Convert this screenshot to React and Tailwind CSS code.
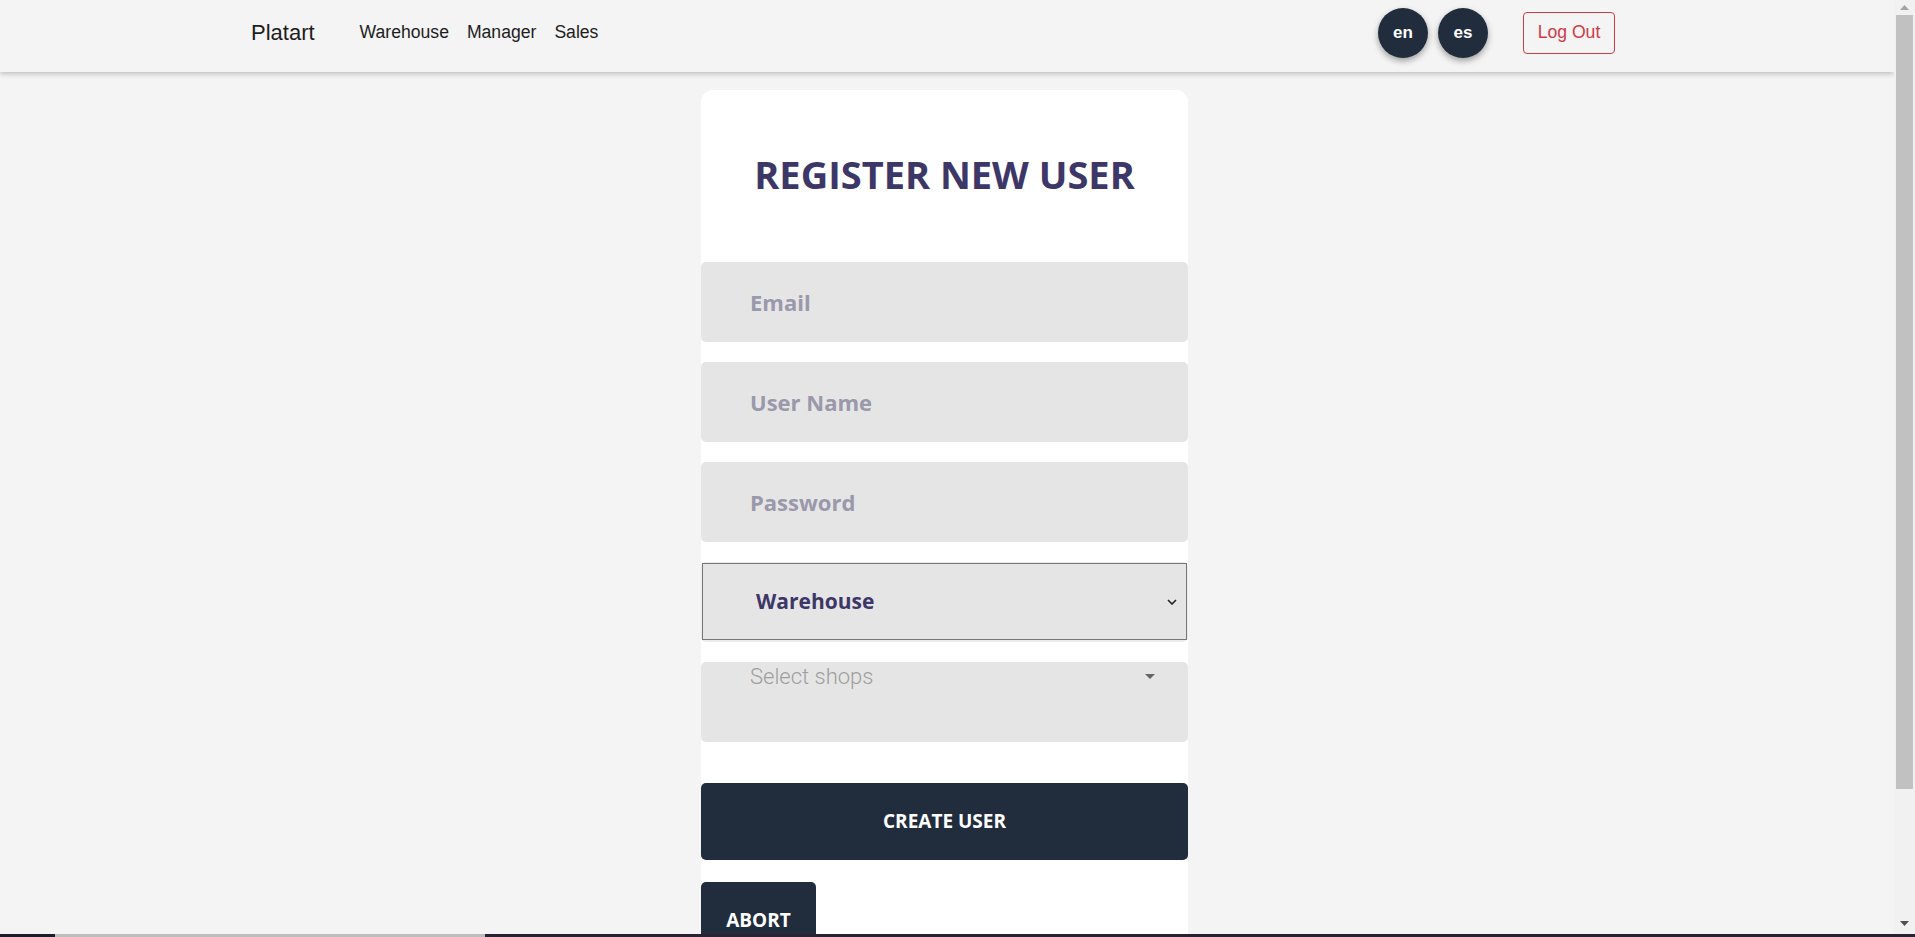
import React, { useState } from 'react';

const Navbar = ({ lang, setLang }) => (
  <nav className="h-[72px] shrink-0 bg-[#f4f4f4] shadow-[0_2px_5px_rgba(0,0,0,0.22)] relative z-10 font-['Liberation_Sans',Arial,sans-serif]">
    <div className="h-full flex items-center justify-between pl-[251px] pr-[279px] pb-[7px]">
      <div className="flex items-center">
        <a className="text-[22px] text-[#1d1d1d] leading-none">Platart</a>
        <ul className="flex items-center gap-[18px] ml-[45px] text-[17.6px] text-[#1d1d1d] leading-none">
          <li>Warehouse</li>
          <li>Manager</li>
          <li>Sales</li>
        </ul>
      </div>
      <div className="flex items-center">
        <div className="flex items-center gap-[10px]">
          {['en', 'es'].map(l => (
            <button
              key={l}
              onClick={() => setLang(l)}
              className="w-[50px] h-[50px] rounded-full bg-[#212d3d] text-white font-bold text-[17px] shadow-[0_3px_6px_rgba(0,0,0,0.35)] flex items-center justify-center"
            >
              {l}
            </button>
          ))}
        </div>
        <button className="ml-[35px] w-[92px] h-[42px] rounded-[4px] border border-[#cf3a46] text-[#cf3a46] text-[17.6px] leading-none">
          Log Out
        </button>
      </div>
    </div>
  </nav>
);

const TextField = ({ placeholder, type = 'text' }) => (
  <input
    type={type}
    placeholder={placeholder}
    className="w-full h-[80px] rounded-[5px] bg-[#e5e5e5] pl-[49px] text-[22px] font-bold text-[#3d3768] placeholder:text-[#9a98ab] outline-none"
  />
);

// classic windows-style scrollbar, as seen in the capture
const Scrollbar = () => (
  <aside className="w-[21px] shrink-0 bg-[#f1f1f1] px-[2px] flex flex-col">
    <div className="h-[15px] flex items-center justify-center">
      <svg width="9" height="5" viewBox="0 0 9 5"><path d="M0 5L4.5 0 9 5z" fill="#a3a3a3" /></svg>
    </div>
    <div className="h-[774px] bg-[#c1c1c1]" />
    <div className="flex-1" />
    <div className="h-[15px] mb-[3px] flex items-center justify-center">
      <svg width="9" height="5" viewBox="0 0 9 5"><path d="M0 0h9L4.5 5z" fill="#505050" /></svg>
    </div>
  </aside>
);

export default function App() {
  const [lang, setLang] = useState('en');

  return (
    <div className="h-[937px] overflow-hidden flex flex-col bg-[#f4f4f4]">
      <div className="flex-1 min-h-0 flex">
        <div className="flex-1 min-w-0 overflow-hidden flex flex-col">
          <Navbar lang={lang} setLang={setLang} />

          <main className="flex justify-center pt-[18px] pb-[96px]">
            <div className="w-[487px] mr-[5px] bg-white rounded-t-[12px] pb-[40px] font-['Open_Sans',sans-serif]">
              {/* title */}
              <div className="h-[172px] flex items-center justify-center pb-[4px]">
                <h1 className="text-[38px] font-bold text-[#3d3768] leading-none">REGISTER NEW USER</h1>
              </div>

              <div className="flex flex-col gap-[20px]">
                <TextField placeholder="Email" type="email" />
                <TextField placeholder="User Name" />
                <TextField placeholder="Password" type="password" />

                {/* role select */}
                <div className="h-[80px] bg-[#ebebeb] rounded-[5px] pt-px px-px">
                  <div className="relative h-[77px] border border-[#767676] bg-[#e5e5e5] flex items-center pl-[53px]">
                    <span className="text-[21px] font-bold text-[#3d3768]">Warehouse</span>
                    <svg className="absolute right-[9px] top-1/2 -translate-y-1/2" width="10" height="6" viewBox="0 0 10 6" fill="none">
                      <path d="M1 1l4 4 4-4" stroke="#222" strokeWidth="1.6" />
                    </svg>
                  </div>
                </div>

                {/* shops multi-select */}
                <div className="h-[80px] rounded-[5px] bg-[#e5e5e5] pl-[49px] pr-[33px] pt-[1px] flex items-start justify-between">
                  <span className="font-['Roboto',sans-serif] font-light text-[22px] text-[#9e9e9e] leading-[28px]">Select shops</span>
                  <svg className="mt-[11px]" width="10" height="5" viewBox="0 0 10 5">
                    <path d="M0 0h10L5 5z" fill="#666" />
                  </svg>
                </div>
              </div>

              <button className="mt-[41px] w-full h-[77px] rounded-[5px] bg-[#212d3d] text-white font-bold text-[19px]">
                CREATE USER
              </button>

              <button className="mt-[22px] w-[115px] h-[77px] rounded-[5px] bg-[#212d3d] text-white font-bold text-[19px]">
                ABORT
              </button>
            </div>
          </main>
        </div>
        <Scrollbar />
      </div>

      {/* bottom edge strip from the capture */}
      <div className="h-[3px] shrink-0 flex">
        <div className="w-[55px] bg-[#1f1d2b]" />
        <div className="w-[430px] bg-[#bdbdbd]" />
        <div className="flex-1 bg-[#2a2233]" />
      </div>
    </div>
  );
}
